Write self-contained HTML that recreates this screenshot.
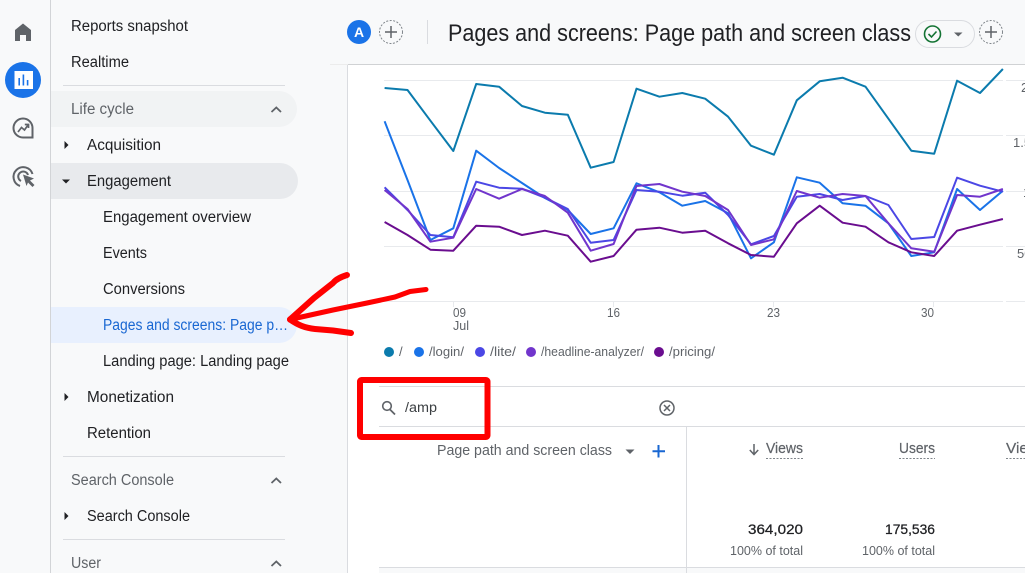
<!DOCTYPE html>
<html lang="en"><head><meta charset="utf-8"><title>Pages and screens</title>
<style>
html,body{margin:0;padding:0;width:1025px;height:573px;overflow:hidden;background:#fff}
svg{position:absolute;left:0;top:0;display:block}
text{font-family:"Liberation Sans",sans-serif;white-space:pre}
.n{font-size:15.5px;fill:#202124}
.g{font-size:15.5px;fill:#5f6368}
.a{font-size:13px;fill:#5f6368}
</style></head><body>
<svg width="1025" height="573" viewBox="0 0 1025 573" xmlns="http://www.w3.org/2000/svg">
<rect x="0" y="0" width="348" height="573" fill="#f8f9fa"/>
<rect x="320" y="0" width="705" height="64" fill="#f8f9fa"/>
<rect x="330" y="64" width="18" height="1" fill="#ececec"/>
<rect x="348" y="64" width="677" height="1" fill="#d0d2d4"/>
<rect x="50" y="0" width="1" height="573" fill="#d2d4d7"/>
<rect x="347" y="65" width="1" height="508" fill="#dadce0"/>

<!-- rail icons -->
<path d="M23 23.500 L15 30 V41 H20 V35 H26 V41 H31 V30 Z" fill="#5f6368"/>
<circle cx="23" cy="80" r="18" fill="#1a73e8"/>
<rect x="14.500" y="71" width="18.500" height="18" fill="#fff"/>
<path d="M19.200 78v7.500M23.400 74.500v11M27.600 80v5.500" stroke="#1a73e8" stroke-width="1.600" fill="none"/>
<path d="M32.500 128 A9.500 9.500 0 1 0 23 137.500 H32.500 Z" fill="none" stroke="#5f6368" stroke-width="2"/>
<path d="M18 132 L21.500 127.500 L24.500 130 L28 125 M24.800 124.500 H28.500 V128" fill="none" stroke="#5f6368" stroke-width="1.700"/>
<path d="M32.500 174 A9.700 9.700 0 1 0 20 186" fill="none" stroke="#5f6368" stroke-width="2"/>
<path d="M28 175 A5 5 0 1 0 21 181" fill="none" stroke="#5f6368" stroke-width="2"/>
<path d="M23 174.500 L34 178.500 L30 180.500 L34.500 185 L32.500 187 L28 182.500 L26.500 186 Z" fill="#5f6368"/>

<!-- nav -->
<path d="M51 91H279a18 18 0 0 1 0 36H51Z" fill="#f1f3f4"/>
<path d="M51 163H280a18 18 0 0 1 0 36H51Z" fill="#e8eaed"/>
<path d="M51 307H279a18 18 0 0 1 0 36H51Z" fill="#e8f0fe"/>
<rect x="63" y="85" width="222" height="1" fill="#dadce0"/>
<rect x="63" y="456" width="222" height="1" fill="#dadce0"/>
<rect x="63" y="539" width="222" height="1" fill="#dadce0"/>

<text class="n" x="71" y="31" textLength="117" lengthAdjust="spacingAndGlyphs">Reports snapshot</text>
<text class="n" x="71" y="67" textLength="58" lengthAdjust="spacingAndGlyphs">Realtime</text>
<text class="g" x="71" y="114" textLength="63" lengthAdjust="spacingAndGlyphs">Life cycle</text>
<text class="n" x="87" y="150" textLength="74" lengthAdjust="spacingAndGlyphs">Acquisition</text>
<text class="n" x="87" y="186" textLength="84" lengthAdjust="spacingAndGlyphs">Engagement</text>
<text class="n" x="103" y="222" textLength="148" lengthAdjust="spacingAndGlyphs">Engagement overview</text>
<text class="n" x="103" y="258" textLength="44" lengthAdjust="spacingAndGlyphs">Events</text>
<text class="n" x="103" y="294" textLength="82" lengthAdjust="spacingAndGlyphs">Conversions</text>
<text x="103" y="330" font-size="15.500" fill="#1967d2" textLength="185" lengthAdjust="spacingAndGlyphs">Pages and screens: Page p…</text>
<text class="n" x="103" y="366" textLength="186" lengthAdjust="spacingAndGlyphs">Landing page: Landing page</text>
<text class="n" x="87" y="402" textLength="87" lengthAdjust="spacingAndGlyphs">Monetization</text>
<text class="n" x="87" y="438" textLength="64" lengthAdjust="spacingAndGlyphs">Retention</text>
<text class="g" x="71" y="485" textLength="103" lengthAdjust="spacingAndGlyphs">Search Console</text>
<text class="n" x="87" y="521" textLength="103" lengthAdjust="spacingAndGlyphs">Search Console</text>
<text class="g" x="71" y="568" textLength="30" lengthAdjust="spacingAndGlyphs">User</text>

<path d="M64.500 141 L68.500 145 L64.500 149Z M64.500 393 L68.500 397 L64.500 401Z M64.500 512 L68.500 516 L64.500 520Z" fill="#202124"/>
<path d="M62 179.500 L70 179.500 L66 183.500Z" fill="#202124"/>
<path d="M271.500 112 L276.300 107.500 L281 112 M271.500 483 L276.300 478.500 L281 483 M271.500 566 L276.300 561.500 L281 566" fill="none" stroke="#5f6368" stroke-width="1.800"/>

<!-- header -->
<circle cx="359" cy="32" r="12" fill="#1a73e8"/>
<text x="359" y="37" font-size="14" font-weight="700" fill="#fff" text-anchor="middle">A</text>
<circle cx="391" cy="32" r="11.500" fill="none" stroke="#80868b" stroke-width="1" stroke-dasharray="2 1.500"/>
<path d="M391 26v12M385 32h12" stroke="#5f6368" stroke-width="1.500"/>
<rect x="427" y="20" width="1" height="24" fill="#dadce0"/>
<text x="448" y="41" font-size="24" fill="#202124" textLength="463" lengthAdjust="spacingAndGlyphs">Pages and screens: Page path and screen class</text>
<rect x="915.500" y="20.500" width="59" height="27" rx="13.500" fill="#f8f9fa" stroke="#dadce0"/>
<circle cx="932.500" cy="34" r="8" fill="none" stroke="#137333" stroke-width="1.600"/>
<path d="M928.500 34 L931.500 37 L936.500 31.500" fill="none" stroke="#137333" stroke-width="1.600"/>
<path d="M954 32.500h8.500l-4.250 4z" fill="#5f6368"/>
<circle cx="991" cy="32" r="11.500" fill="none" stroke="#80868b" stroke-width="1" stroke-dasharray="2 1.500"/>
<path d="M991 26v12M985 32h12" stroke="#5f6368" stroke-width="1.500"/>

<!-- grid -->
<g fill="#e8eaed">
<rect x="384" y="80" width="619" height="1"/><rect x="1006" y="80" width="19" height="1"/>
<rect x="384" y="135" width="619" height="1"/><rect x="1006" y="135" width="19" height="1"/>
<rect x="384" y="191" width="619" height="1"/><rect x="1006" y="191" width="19" height="1"/>
<rect x="384" y="246" width="619" height="1"/><rect x="1006" y="246" width="19" height="1"/>
<rect x="384" y="301" width="619" height="1"/><rect x="1006" y="301" width="19" height="1"/>
<rect x="453" y="301" width="1" height="6"/><rect x="613" y="301" width="1" height="6"/><rect x="773" y="301" width="1" height="6"/><rect x="933" y="301" width="1" height="6"/>
</g>
<text class="a" x="1021" y="92">2</text>
<text class="a" x="1013" y="147">1.5</text>
<text class="a" x="1023" y="197">1</text>
<text class="a" x="1017" y="258">50</text>
<text class="a" x="453" y="317" textLength="13" lengthAdjust="spacingAndGlyphs">09</text>
<text class="a" x="453" y="330" textLength="16" lengthAdjust="spacingAndGlyphs">Jul</text>
<text class="a" x="607" y="317" textLength="13" lengthAdjust="spacingAndGlyphs">16</text>
<text class="a" x="767" y="317" textLength="13" lengthAdjust="spacingAndGlyphs">23</text>
<text class="a" x="921" y="317" textLength="13" lengthAdjust="spacingAndGlyphs">30</text>

<g fill="none" stroke-width="2" stroke-linejoin="round">
<polyline stroke="#0b7bad" points="384.6,88 407.5,90 430.4,120.7 453.3,151 476.2,84 499.1,86.700 522,106 544.9,112.700 567.800,114.700 590.700,167.700 613.600,162 636.500,88.700 659.400,96.700 682.300,93 705.200,98.700 728.100,116.700 751,145.700 773.900,154.700 796.800,100.300 819.700,81.300 842.600,77.700 865.500,86.700 888.400,118.700 911.300,150.700 934.200,153.700 957.100,80.700 980,93 1002.900,69"/>
<polyline stroke="#1a73e8" points="384.6,121.3 407.5,180 430.4,240 453.3,228.300 476.200,150.700 499.100,168 522,183 544.900,198 567.800,210 590.700,234 613.600,228.300 636.500,183.300 659.400,192.300 682.300,205.700 705.200,201 728.100,213.300 751,258.300 773.900,242.300 796.800,177.300 819.700,182.700 842.600,203.300 865.500,205.700 888.400,223.300 911.300,256 934.200,252.300 957.100,189 980,210 1002.900,190.700"/>
<polyline stroke="#4b47e5" points="384.6,187.3 407.5,210 430.4,235 453.3,237.300 476.200,181.700 499.100,187.700 522,188.700 544.900,197.700 567.800,209 590.700,242.700 613.600,240 636.500,190 659.400,191.700 682.300,195.700 705.200,192.700 728.100,215 751,244.300 773.900,236 796.800,196.700 819.700,194 842.600,200 865.500,196 888.400,205 911.300,239 934.200,237 957.100,177.700 980,185.700 1002.900,191.700"/>
<polyline stroke="#7135cc" points="384.6,190 407.5,209 430.4,241.700 453.3,237.700 476.200,189 499.100,198.700 522,189 544.900,196 567.800,212.700 590.700,250.700 613.600,244 636.500,186 659.400,184 682.300,191.700 705.200,196 728.100,210 751,245 773.900,239.300 796.800,191 819.700,197.700 842.600,194 865.500,196 888.400,223.300 911.300,248.300 934.200,251.700 957.100,195 980,196.700 1002.900,189"/>
<polyline stroke="#6a0d8f" points="384.6,222 407.5,235 430.4,249.700 453.3,250.700 476.200,225.700 499.100,226.700 522,235 544.900,230.700 567.800,235.700 590.700,261.700 613.600,256 636.500,229.700 659.400,227.700 682.300,232.700 705.200,230.700 728.100,243.300 751,255 773.900,256.700 796.800,223.300 819.700,205.700 842.600,222.700 865.500,226.700 888.400,242.300 911.300,252.300 934.200,256 957.100,230.700 980,224.700 1002.900,219"/>
</g>

<!-- legend -->
<circle cx="389" cy="352" r="5" fill="#0b7bad"/>
<circle cx="419" cy="352" r="5" fill="#1a73e8"/>
<circle cx="480" cy="352" r="5" fill="#4b47e5"/>
<circle cx="531" cy="352" r="5" fill="#7135cc"/>
<circle cx="659" cy="352" r="5" fill="#6a0d8f"/>
<text class="a" x="399" y="356">/</text>
<text class="a" x="429" y="356" textLength="35" lengthAdjust="spacingAndGlyphs">/login/</text>
<text class="a" x="490" y="356" textLength="26" lengthAdjust="spacingAndGlyphs">/lite/</text>
<text class="a" x="541" y="356" textLength="103" lengthAdjust="spacingAndGlyphs">/headline-analyzer/</text>
<text class="a" x="669" y="356" textLength="46" lengthAdjust="spacingAndGlyphs">/pricing/</text>

<!-- table -->
<rect x="379" y="386" width="646" height="1" fill="#dadce0"/>
<rect x="379" y="426" width="646" height="1" fill="#dadce0"/>
<rect x="686" y="427" width="1" height="146" fill="#dadce0"/>
<rect x="379" y="568" width="646" height="5" fill="#f8f9fa"/>
<rect x="379" y="567" width="646" height="1" fill="#dadce0"/>
<rect x="686" y="568" width="1" height="5" fill="#dadce0"/>

<circle cx="387" cy="406" r="4.300" fill="none" stroke="#5f6368" stroke-width="1.600"/>
<path d="M390 409.500 L395 414.500" stroke="#5f6368" stroke-width="1.800"/>
<text x="405" y="412" font-size="13.500" fill="#3c4043" textLength="32" lengthAdjust="spacingAndGlyphs">/amp</text>
<circle cx="667" cy="408" r="7" fill="none" stroke="#5f6368" stroke-width="1.500"/>
<path d="M664 405l6 6M670 405l-6 6" stroke="#5f6368" stroke-width="1.500"/>
<text x="437" y="455" font-size="15" fill="#5f6368" textLength="175" lengthAdjust="spacingAndGlyphs">Page path and screen class</text>
<path d="M625.500 449.500h9l-4.500 4.500z" fill="#5f6368"/>
<path d="M658.500 445v12.500M652.500 451.200h12.500" stroke="#1967d2" stroke-width="2"/>

<path d="M754 444v10M749.800 450l4.200 4.500 4.200-4.500" fill="none" stroke="#5f6368" stroke-width="1.500"/>
<text x="766" y="453" font-size="14.500" fill="#5f6368" stroke="#5f6368" stroke-width=".2" textLength="37" lengthAdjust="spacingAndGlyphs">Views</text>
<path d="M766 458.500H803" stroke="#80868b" stroke-dasharray="2 1.500"/>
<text x="899" y="453" font-size="14.500" fill="#5f6368" stroke="#5f6368" stroke-width=".2" textLength="36" lengthAdjust="spacingAndGlyphs">Users</text>
<path d="M899 458.500H935" stroke="#80868b" stroke-dasharray="2 1.500"/>
<text x="1006" y="453" font-size="14.500" fill="#5f6368" stroke="#5f6368" stroke-width=".2" textLength="22" lengthAdjust="spacingAndGlyphs">Vie</text>
<path d="M1006 458.500H1025" stroke="#80868b" stroke-dasharray="2 1.500"/>

<text x="748" y="534" font-size="13.500" fill="#202124" stroke="#202124" stroke-width=".25" textLength="55" lengthAdjust="spacingAndGlyphs">364,020</text>
<text x="885" y="534" font-size="13.500" fill="#202124" stroke="#202124" stroke-width=".25" textLength="50" lengthAdjust="spacingAndGlyphs">175,536</text>
<text x="730" y="555" font-size="12.500" fill="#5f6368" textLength="73" lengthAdjust="spacingAndGlyphs">100% of total</text>
<text x="862" y="555" font-size="12.500" fill="#5f6368" textLength="73" lengthAdjust="spacingAndGlyphs">100% of total</text>

<!-- red annotations -->
<rect x="360" y="380" width="127.500" height="57" rx="1.500" fill="none" stroke="#ff0000" stroke-width="6"/>
<g fill="none" stroke="#ff0000" stroke-linecap="round" stroke-linejoin="round">
<path d="M347 275 C341 277 336 279 333 283 L314 298 L290 319.500" stroke-width="6"/>
<path d="M426 289.500 L410 291.500 L395 297 L367 303 L333 310 L290 319.500" stroke-width="5"/>
<path d="M290 319.500 C298 325 305 328 315 329 L333 330.500 L351 333" stroke-width="6"/>
</g>
</svg>
</body></html>
